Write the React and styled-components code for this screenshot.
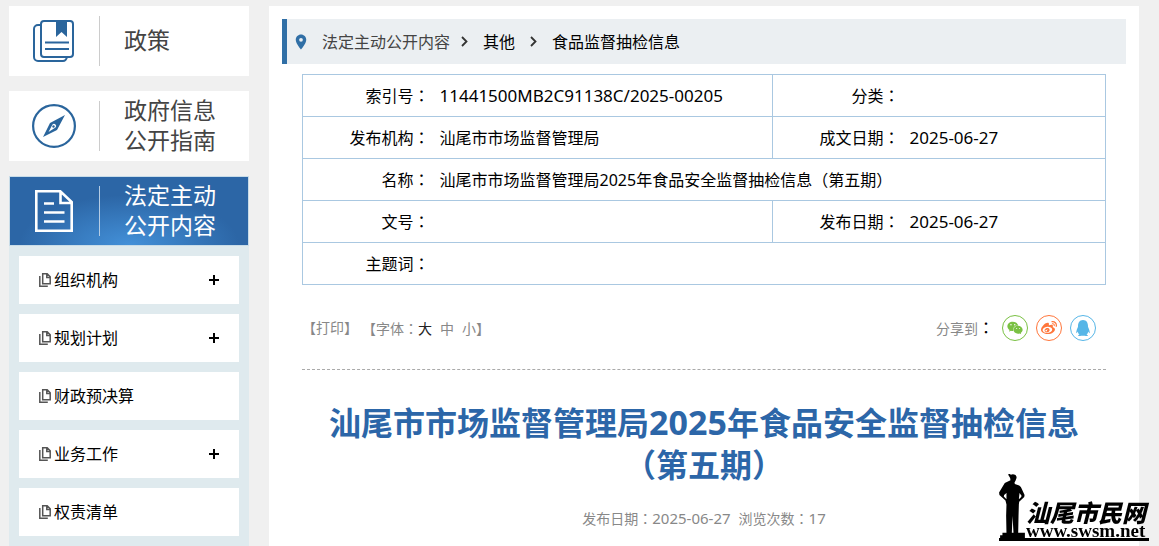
import React from "react";
import styled, { createGlobalStyle } from "styled-components";
import { FaWeixin, FaWeibo, FaQq } from "react-icons/fa";
import { MdLocationOn } from "react-icons/md";

const GlobalStyle = createGlobalStyle`
  *, *::before, *::after { box-sizing: border-box; }
  body {
    margin: 0;
    background: #f0f0f0;
    color: #000;
    font: 16px/24px "Noto Sans", "Noto Sans CJK SC", sans-serif;
  }
  a { color: inherit; text-decoration: none; }
  button { font: inherit; color: inherit; background: none; border: 0; padding: 0; cursor: pointer; }
`;

const Page = styled.div`
  display: grid;
  grid-template-columns: 240px minmax(0, 1fr);
  gap: 20px;
  min-height: 100vh;
  padding: 6px 20px 0 9px;
`;

const Sidebar = styled.aside`
  display: flex;
  flex-direction: column;
`;

const Section = styled.a`
  display: flex;
  align-items: center;
  height: 70px;
  margin-bottom: ${(p) => (p.$active ? 0 : 15)}px;
  background: ${(p) =>
    p.$active
      ? "radial-gradient(ellipse 110px 50px at 50% 100%, #4390d8, #2c66a6)"
      : "#fff"};
  border: ${(p) => (p.$active ? "1px solid #c8dce8" : "0")};
  padding-left: ${(p) => (p.$active ? 0 : 1)}px;
  color: ${(p) => (p.$active ? "#fff" : "#444")};
  font-size: 23px;
  line-height: 30px;
`;

const SectionIcon = styled.span`
  display: flex;
  align-items: center;
  justify-content: center;
  flex: none;
  width: 90px;
  height: 50px;
  padding-right: 2px;
  color: ${(p) => (p.$active ? "#fff" : "#2a659c")};
  border-right: 1px solid ${(p) => (p.$active ? "#b5cce4" : "#ccc")};
`;

const SectionLabel = styled.span`
  width: 96px;
  margin: 0 0 2px 24px;
`;

const Submenu = styled.ul`
  display: flex;
  flex-direction: column;
  flex: 1;
  gap: 10px;
  margin: 0;
  padding: 10px;
  list-style: none;
  background: #dfeaee;
`;

const SubItem = styled.li`
  display: flex;
  align-items: center;
  height: 48px;
  padding: 0 20px;
  background: #fff;
`;

const SubLink = styled.a`
  display: flex;
  align-items: center;
  gap: 3px;
  flex: 1;
`;

const Expand = styled.button`
  display: flex;
`;

const Main = styled.main`
  padding: 13px 13px 0;
  background: #fff;
`;

const Breadcrumb = styled.nav`
  display: flex;
  align-items: center;
  height: 45px;
  padding-left: 5px;
  margin-bottom: 10px;
  border-left: 5px solid #306fa6;
  background: #ebeff2;
`;

const Pin = styled(MdLocationOn)`
  width: 18px;
  height: 18px;
  margin-right: 12px;
  color: #306fa6;
`;

const Crumb = styled.a`
  color: ${(p) => (p.$muted ? "#444" : "#000")};
`;

const Chevron = styled.svg`
  width: 7px;
  height: 11px;
  margin: 0 15px 0 ${(p) => p.$before}px;
`;

const Article = styled.article`
  padding: 0 20px;
`;

const InfoTable = styled.table`
  width: 100%;
  table-layout: fixed;
  border-collapse: collapse;
  border: 1px solid #aac8e1;
  tr { border-bottom: 1px solid #aac8e1; }
`;

const LabelCol = styled.col`
  width: 127px;
`;

const NarrowCol = styled.col`
  width: 206px;
`;

const LabelCell = styled.th`
  height: 42px;
  padding: 0;
  border-left: 1px solid #aac8e1;
  font-weight: 400;
  text-align: right;
`;

const ValueCell = styled.td`
  padding: 0 0 0 10px;
`;

const Punct = styled.span`
  font-family: "Noto Sans CJK TC", sans-serif;
`;

const Num = styled.span`
  font-size: ${(p) => p.$size}px;
  line-height: 1;
`;

const Toolbar = styled.div`
  display: flex;
  align-items: center;
  justify-content: space-between;
  height: 85px;
  padding: 2px 10px 0 0;
  border-bottom: 1px dashed #aaa;
  color: #888;
  font-size: 14px;
`;

const Tools = styled.div`
  display: flex;
`;

const PrintGroup = styled.span`
  margin-right: 4px;
`;

const SizeButton = styled.button`
  margin-right: ${(p) => (p.$last ? 0 : 8)}px;
  color: ${(p) => (p.$current ? "#222" : "#888")};
`;

const Share = styled.div`
  display: flex;
  align-items: center;
  gap: 8px;
`;

const ShareColon = styled(Punct)`
  color: #000;
  font-size: 16px;
`;

const ShareButton = styled.button`
  display: flex;
  align-items: center;
  justify-content: center;
  width: 26px;
  height: 26px;
  border: 1px solid ${(p) => p.$color};
  border-radius: 50%;
  color: ${(p) => p.$color};
`;

const Title = styled.h1`
  margin: 32px 0 20px;
  color: #2c66a8;
  font-size: 32px;
  line-height: 42px;
  text-align: center;
`;

const Meta = styled.p`
  display: flex;
  justify-content: center;
  gap: 8px;
  margin: 0;
  color: #888;
  font-size: 14px;
`;

const Watermark = styled.a`
  position: fixed;
  right: 10px;
  bottom: 5px;
  display: flex;
  align-items: flex-end;
  width: 150px;
  border-bottom: 3px solid #000;
  color: #000;
`;

const Statue = styled.svg`
  flex: none;
  width: 27px;
  height: 64px;
`;

const SiteName = styled.span`
  display: flex;
  flex-direction: column;
  font: italic 900 24px/24px "Noto Sans CJK SC", sans-serif;
`;

const SiteUrl = styled.span`
  font: bold 19px/14px "Liberation Serif", serif;
`;

const PolicyIcon = () => (
  <svg width="42" height="42" viewBox="0 0 42 42" fill="none" stroke="currentColor" strokeWidth="2">
    <path d="M8 5H5a4 4 0 0 0-4 4v28a4 4 0 0 0 4 4h25q3 0 4-4" />
    <rect x="8" y="1" width="32" height="36" rx="3" />
    <path d="M12 22.500h24M12 29h24" />
    <path d="M23 1h11v16l-5.500-5-5.500 5z" fill="currentColor" stroke="none" />
  </svg>
);

const CompassIcon = () => (
  <svg width="44" height="44" viewBox="0 0 44 44" fill="none">
    <circle cx="22" cy="22" r="20.900" stroke="currentColor" strokeWidth="2.200" />
    <path fill="currentColor" fillRule="evenodd" d="M33 11 25 26 11 33 18 19zM20.500 20.500l-4 7.500 7-4.500a2 2 0 0 0-3-3z" />
    <circle cx="21.500" cy="22.500" r="1.200" fill="currentColor" />
  </svg>
);

const DocumentIcon = () => (
  <svg width="38" height="42" viewBox="0 0 38 42" fill="none" stroke="currentColor" strokeWidth="2.600">
    <path d="M1.300 1.300h24L36.700 12v28.700H1.300zM25.500 1.300V13h11.200M9 13.500h10M9 22.500h20.500M9 31.500h20.500" />
  </svg>
);

const CopyIcon = () => (
  <svg width="12" height="14" viewBox="0 0 12 14" fill="none" stroke="#555" strokeWidth="1.500">
    <path d="M3.700.8h4.500l3 3v6.900H3.700zM7.800.8v3.600h3.400M.8 3v10.200h8" />
  </svg>
);

const PlusIcon = () => (
  <svg width="10" height="10" viewBox="0 0 10 10" stroke="#000" strokeWidth="2">
    <path d="M0 5h10M5 0v10" />
  </svg>
);

const Separator = ({ before }) => (
  <Chevron $before={before} viewBox="0 0 7 11" fill="none" stroke="#333" strokeWidth="1.800">
    <path d="M1 1l4.500 4.500L1 10" />
  </Chevron>
);

const sections = [
  { lines: ["政策"], Icon: PolicyIcon },
  { lines: ["政府信息", "公开指南"], Icon: CompassIcon },
  { lines: ["法定主动", "公开内容"], Icon: DocumentIcon, active: true },
];

const subItems = [
  { label: "组织机构", expandable: true },
  { label: "规划计划", expandable: true },
  { label: "财政预决算" },
  { label: "业务工作", expandable: true },
  { label: "权责清单" },
];

const Headline = ({ size }) => (
  <>汕尾市市场监督管理局<Num $size={size}>2025</Num>年食品安全监督抽检信息（第五期）</>
);

const infoRows = [
  [["索引号", <Num $size={17}>11441500MB2C91138C/2025-00205</Num>], ["分类", ""]],
  [["发布机构", "汕尾市市场监督管理局"], ["成文日期", <Num $size={17}>2025-06-27</Num>]],
  [["名称", <Headline size={16} />]],
  [["文号", ""], ["发布日期", <Num $size={17}>2025-06-27</Num>]],
  [["主题词", ""]],
];

const shares = [
  { label: "微信", color: "#7ac143", Icon: FaWeixin },
  { label: "微博", color: "#ff763b", Icon: FaWeibo },
  { label: "QQ", color: "#56b6e7", Icon: FaQq },
];

export default function App() {
  return (
    <>
      <GlobalStyle />
      <Page>
        <Sidebar>
          {sections.map(({ lines, Icon, active }) => (
            <Section href="#" key={lines[0]} $active={active}>
              <SectionIcon $active={active}><Icon /></SectionIcon>
              <SectionLabel>{lines.join("")}</SectionLabel>
            </Section>
          ))}
          <Submenu>
            {subItems.map(({ label, expandable }) => (
              <SubItem key={label}>
                <SubLink href="#"><CopyIcon />{label}</SubLink>
                {expandable && <Expand aria-label={`展开${label}`}><PlusIcon /></Expand>}
              </SubItem>
            ))}
          </Submenu>
        </Sidebar>
        <Main>
          <Breadcrumb>
            <Pin />
            <Crumb href="#" $muted>法定主动公开内容</Crumb>
            <Separator before={11} />
            <Crumb href="#">其他</Crumb>
            <Separator before={15} />
            <Crumb href="#">食品监督抽检信息</Crumb>
          </Breadcrumb>
          <Article>
            <InfoTable>
              <colgroup>
                <LabelCol />
                <col />
                <LabelCol />
                <NarrowCol />
              </colgroup>
              <tbody>
                {infoRows.map((row) => (
                  <tr key={row[0][0]}>
                    {row.map(([label, value]) => (
                      <React.Fragment key={label}>
                        <LabelCell scope="row">{label}<Punct>：</Punct></LabelCell>
                        <ValueCell colSpan={row.length === 1 ? 3 : 1}>{value}</ValueCell>
                      </React.Fragment>
                    ))}
                  </tr>
                ))}
              </tbody>
            </InfoTable>
            <Toolbar>
              <Tools>
                <PrintGroup>【<button>打印</button>】</PrintGroup>
                <span>
                  【字体<Punct>：</Punct>
                  <SizeButton $current>大</SizeButton>
                  <SizeButton>中</SizeButton>
                  <SizeButton $last>小</SizeButton>】
                </span>
              </Tools>
              <Share>
                <span>分享到<ShareColon>：</ShareColon></span>
                {shares.map(({ label, color, Icon }) => (
                  <ShareButton key={label} aria-label={label} $color={color}><Icon size={16} /></ShareButton>
                ))}
              </Share>
            </Toolbar>
            <Title><Headline size={34} /></Title>
            <Meta>
              <span>发布日期<Punct>：</Punct><Num $size={15}>2025-06-27</Num></span>
              <span>浏览次数<Punct>：</Punct><Num $size={15}>17</Num></span>
            </Meta>
          </Article>
        </Main>
      </Page>
      <Watermark href="#">
        <Statue viewBox="12 13 80 191" aria-hidden="true">
          <path
            fillRule="evenodd"
            d="M47 15q7-3 14 1 4 4 3 9l-3 8-3 5 1 5 13 4 5 5 11 24-1 6-15 14-1 8-1 34-1 50h20v16H15v-8h7v-8h12l-1-50 1-34-3-12-18-16-1-8 12-20 5-8 17-8-1-7-5-8-1-8zM27 76l7-6v18l-8-8zM73 70l6 8-1 4-7 6zM52 138l3 50h-5z"
          />
        </Statue>
        <SiteName>
          汕尾市民网
          <SiteUrl>www.swsm.net</SiteUrl>
        </SiteName>
      </Watermark>
    </>
  );
}
